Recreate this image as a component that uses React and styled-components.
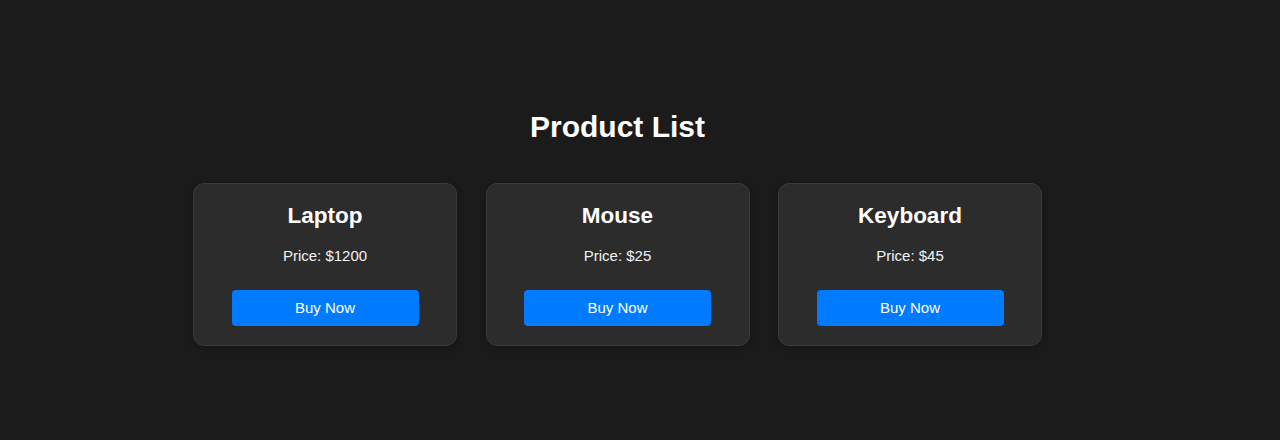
import React from 'react';
import styled, { createGlobalStyle } from 'styled-components';

const GlobalStyle = createGlobalStyle`
  * {
    box-sizing: border-box;
  }

  body {
    margin: 0;
    background: #1b1b1b;
    color: #ffffff;
    font-family: "Liberation Sans", Arial, sans-serif;
  }
`;

const Page = styled.main`
  width: 1235px;
  min-height: 440px;
  padding-top: 109px;
  display: flex;
  flex-direction: column;
  align-items: center;
`;

const Title = styled.h2`
  margin: 0 0 38px;
  font-size: 30px;
  font-weight: 700;
  line-height: 36px;
`;

const CardRow = styled.div`
  display: flex;
  gap: 28.5px;
`;

const Card = styled.div`
  width: 264px;
  padding: 19px 20px 19px;
  background: #2c2c2c;
  border: 1px solid #3a3a3a;
  border-radius: 11px;
  box-shadow: 0 2px 6px rgba(0, 0, 0, 0.25);
  display: flex;
  flex-direction: column;
  align-items: center;
`;

const Name = styled.h3`
  margin: 0;
  font-size: 22.5px;
  font-weight: 700;
  line-height: 26px;
`;

const Price = styled.p`
  margin: 18px 0 0;
  font-size: 15px;
  line-height: 17px;
  color: #f2f2f2;
`;

const BuyButton = styled.button`
  margin-top: 26px;
  width: 187px;
  height: 36px;
  padding: 0 0 2px;
  border: none;
  border-radius: 4px;
  background: #007bff;
  color: #ffffff;
  font-family: inherit;
  font-size: 15px;
  cursor: pointer;

  &:hover {
    background: #0069d9;
  }
`;

const products = [
  { id: 1, name: 'Laptop', price: 1200 },
  { id: 2, name: 'Mouse', price: 25 },
  { id: 3, name: 'Keyboard', price: 45 },
];

const App = () => {
  return (
    <>
      <GlobalStyle />
      <Page>
        <Title>Product List</Title>
        <CardRow>
          {products.map(product => (
            <Card key={product.id}>
              <Name>{product.name}</Name>
              <Price>Price: ${product.price}</Price>
              <BuyButton>Buy Now</BuyButton>
            </Card>
          ))}
        </CardRow>
      </Page>
    </>
  );
};

export default App;
